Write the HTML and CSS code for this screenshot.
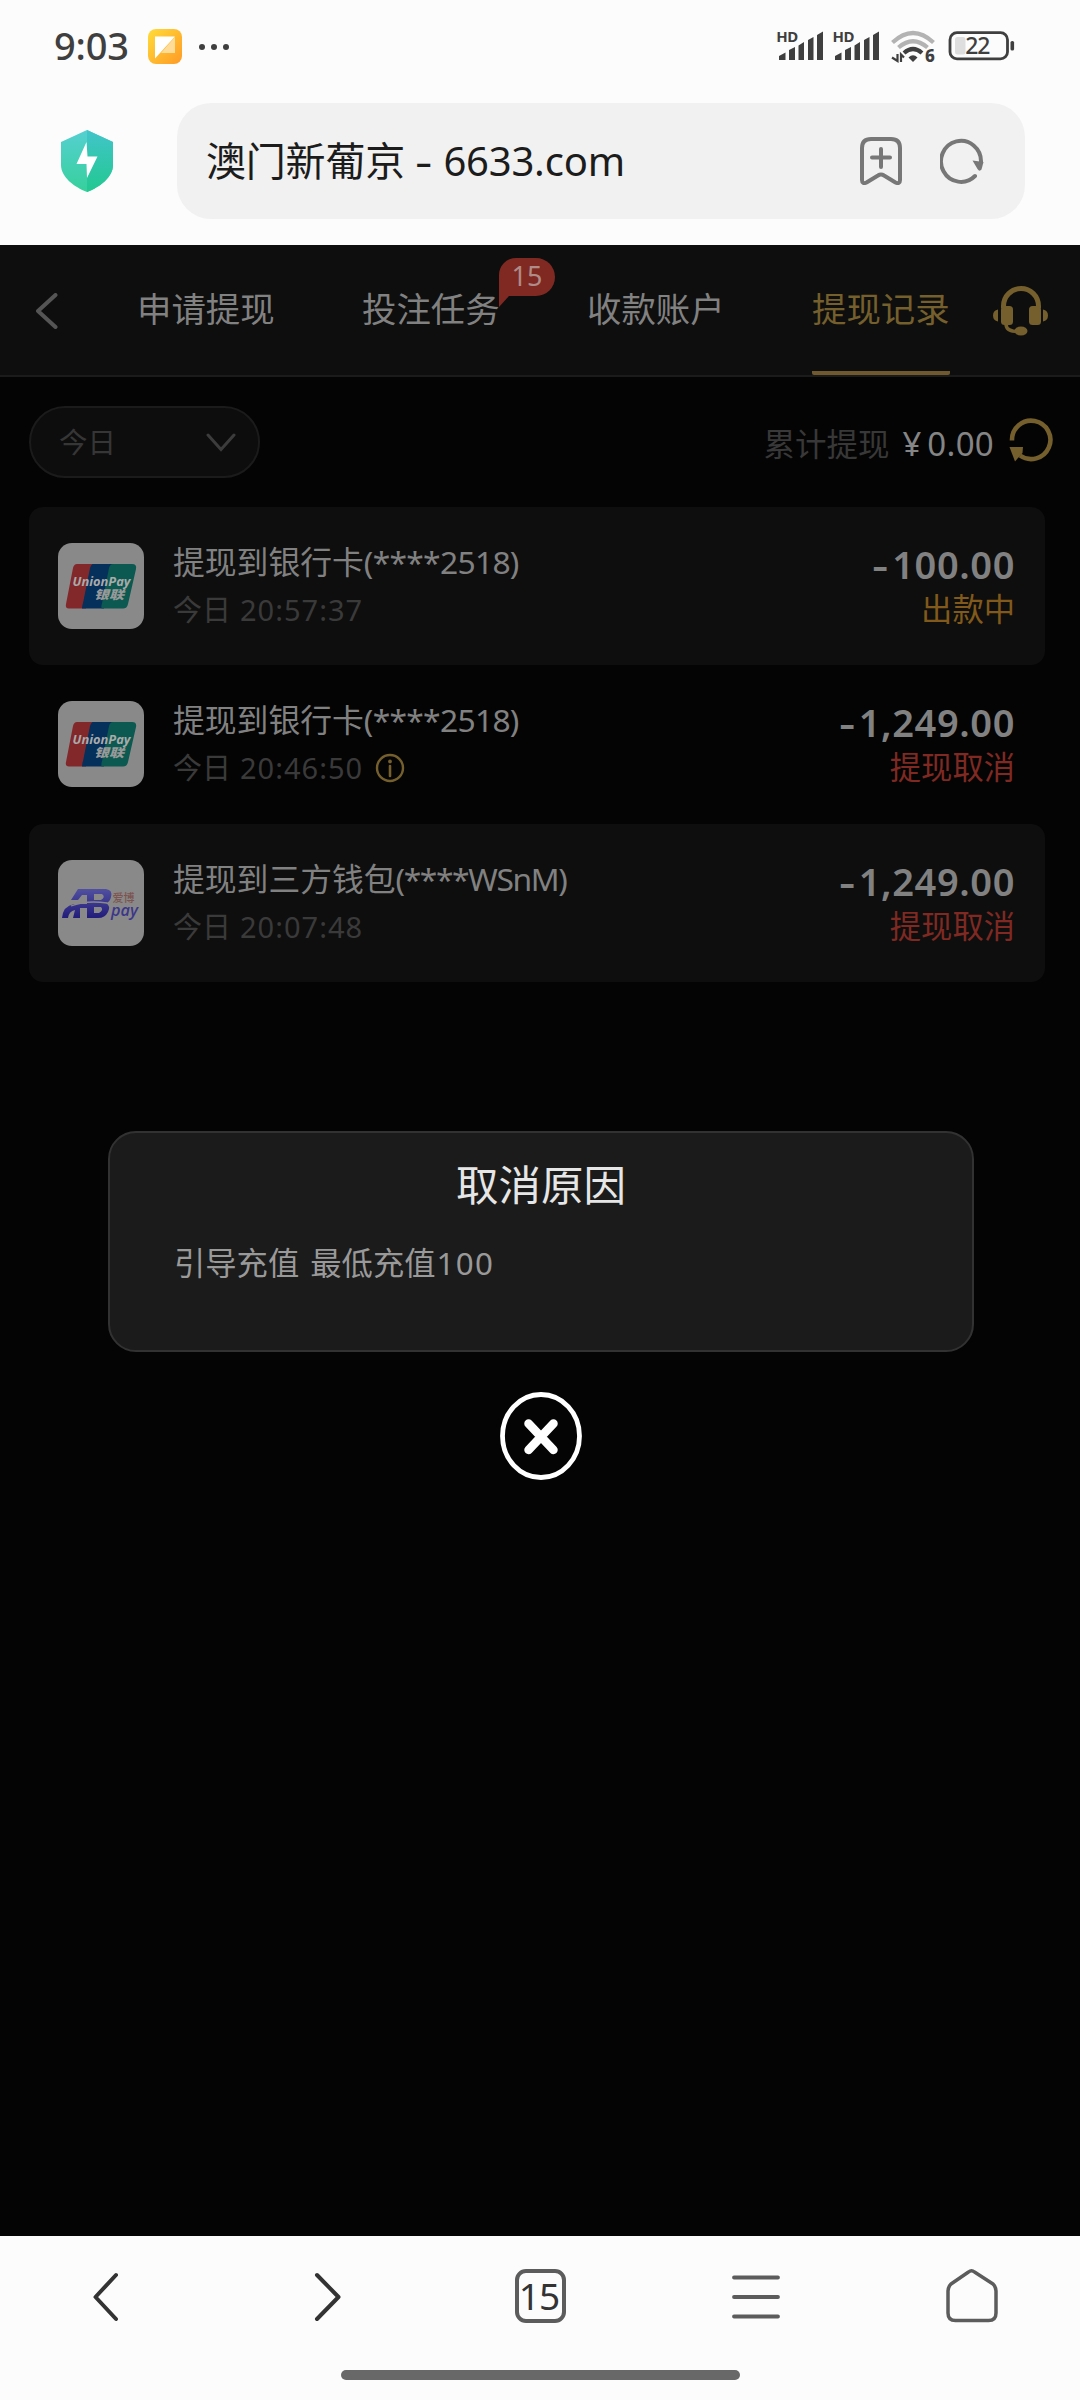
FILE: index.html
```html
<!DOCTYPE html>
<html lang="zh-CN">
<head>
<meta charset="utf-8">
<title>提现记录</title>
<link rel="stylesheet" href="styles.css">
</head>
<body>
<header class="chrome">
  <div class="status">
    <span class="clock">9:03</span>
    <svg class="note" width="34" height="35" viewBox="0 0 34 35">
      <defs><linearGradient id="ng" x1="0" y1="0" x2="1" y2="1"><stop offset="0" stop-color="#ffdc3a"/><stop offset="1" stop-color="#ff9a26"/></linearGradient></defs>
      <rect width="34" height="35" rx="8" fill="url(#ng)"/>
      <path d="M27 8V24H13Z" fill="#ffdc98"/><path d="M7 7.500H27L7 29.500Z" fill="#fff"/>
    </svg>
    <span class="dots"><i></i><i></i><i></i></span>
    <svg class="indicators" width="240" height="46" viewBox="776 23 240 46">
      <g fill="#3f3f3f">
        <text x="776.300" y="42.200" class="hd" textLength="22">HD</text>
        <path d="M779 60V56L785.500 52.500V60ZM789 60V50L795 47V60ZM798.500 60V45.500L804 42V60ZM808 60V40L813.500 37V60ZM817 60V35L823 31.500V60Z"/>
        <text x="832.500" y="42.200" class="hd" textLength="22">HD</text>
        <path d="M835 60V56L841.500 52.500V60ZM845 60V50L851 47V60ZM854.500 60V45.500L860 42V60ZM864 60V40L869.500 37V60ZM873 60V35L879 31.500V60Z"/>
      </g>
      <g fill="none" stroke-width="4.200">
        <path d="M892.500 42.500Q913 23.500 933.500 42.500" stroke="#b3b3b3"/>
        <path d="M898.500 47.500Q913 35 927.500 47.500" stroke="#b3b3b3"/>
        <path d="M904 53Q913 45 922 53" stroke="#3f3f3f"/>
      </g>
      <path d="M908.500 57.500Q913 53 917.500 57.500L913 62Z" fill="#3f3f3f"/>
      <path d="M897.500 54V61L892 57.500M901 62V54.500L904 57.500" fill="none" stroke="#3f3f3f" stroke-width="2.200"/>
      <text x="925" y="62" class="six">6</text>
      <rect x="950" y="32.700" width="57.500" height="26.200" rx="7" fill="none" stroke="#3f3f3f" stroke-width="2.800"/>
      <rect x="955" y="37" width="10.500" height="17.500" rx="2.500" fill="#dedede"/>
      <rect x="1010.500" y="41" width="3.600" height="9.500" rx="1.600" fill="#3f3f3f"/>
      <text x="965.300" y="54.300" class="bat" textLength="25">22</text>
    </svg>
  </div>
  <div class="address">
    <svg class="shield" width="54" height="62" viewBox="0 0 54 62">
      <defs><linearGradient id="sg" x1="0" y1="0" x2="0" y2="1"><stop offset="0" stop-color="#55d0d1"/><stop offset="1" stop-color="#37d09c"/></linearGradient>
      <linearGradient id="sh" x1="0" y1="0" x2="0" y2="1"><stop offset="0" stop-color="#42c5ca"/><stop offset="1" stop-color="#22c890"/></linearGradient></defs>
      <path d="M27 0L53 12V35C53 47 40 57 27 62C14 57 1 47 1 35V12Z" fill="url(#sg)"/>
      <path d="M27 0L53 12V35C53 47 40 57 27 62Z" fill="url(#sh)"/>
      <path d="M26.500 12L16.500 34H26.500L27 48L37.500 26.500H27.500Z" fill="#fff"/>
    </svg>
    <div class="urlbar">
      <span class="url">澳门新葡京 <span class="dash">-</span> 6633.com</span>
      <svg width="42" height="48" viewBox="0 0 42 48" fill="none" stroke="#777" stroke-width="4" stroke-linecap="round" stroke-linejoin="round">
        <path d="M2 43V11Q2 2 11 2H31Q40 2 40 11V43Q40 47.500 35.500 45.500L24 38.500Q21 36.500 18 38.500L6.500 45.500Q2 47.500 2 43ZM21 12V30M12 20.500H30"/>
      </svg>
      <svg width="44" height="46" viewBox="0 0 44 46">
        <path d="M35 38A20 20.500 0 1 1 41 24" fill="none" stroke="#777" stroke-width="4" stroke-linecap="round"/>
        <path d="M32.500 22.500L43.500 24L41.500 31.500Q39.500 34 37.500 31Z" fill="#777"/>
      </svg>
    </div>
  </div>
</header>

<main class="page">
  <nav class="tabs">
    <svg class="back" width="22" height="36" viewBox="0 0 22 36"><path d="M19.500 2L2 18L19.500 34" fill="none" stroke="#555" stroke-width="4" stroke-linecap="round" stroke-linejoin="round"/></svg>
    <div class="tablist">
      <span class="tab">申请提现</span>
      <span class="tab">投注任务<span class="badge">15<svg width="10" height="11" viewBox="0 0 10 11"><path d="M0 0H10L0 11Z" fill="#7f2922"/></svg></span></span>
      <span class="tab">收款账户</span>
      <span class="tab active">提现记录</span>
    </div>
    <svg class="headset" width="56" height="50" viewBox="0 0 56 50" fill="#745f2d">
      <path d="M10.500 22V20A17.500 17.500 0 0 1 45.500 20V22" fill="none" stroke="#745f2d" stroke-width="5"/>
      <rect x="8" y="20" width="12" height="19" rx="3.500"/><rect x="36" y="20" width="12" height="19" rx="3.500"/>
      <path d="M5 23.500V35.500Q0 34.500 0 29.500T5 23.500ZM50 23.500V35.500Q55 34.500 55 29.500T50 23.500Z"/>
      <path d="M13 38Q13 45.500 25 45.500" fill="none" stroke="#745f2d" stroke-width="3.500"/>
      <ellipse cx="28" cy="45" rx="6.500" ry="4.500"/>
    </svg>
  </nav>
  <section class="filters">
    <div class="select"><span>今日</span><svg width="30" height="19" viewBox="0 0 30 19"><path d="M2 2L15 16.500L28 2" fill="none" stroke="#3c3c3c" stroke-width="3" stroke-linecap="round"/></svg></div>
    <div class="total"><span class="label">累计提现</span><span class="yen">¥</span><span class="sum">0.00</span>
      <svg width="44" height="45" viewBox="0 0 44 45"><path d="M3 23.500A19.200 19.200 0 1 1 11 38.500" fill="none" stroke="#745f2d" stroke-width="4.600"/><path d="M.5 30H14L13.500 36L6 44.500Z" fill="#745f2d"/></svg>
    </div>
  </section>
  <section class="records">
    <article class="record">
      <svg class="logo" width="86" height="86" viewBox="0 0 86 86">
        <rect width="86" height="86" rx="14" fill="#898989"/>
        <g id="up">
          <path d="M19 21H39L28 65.500H11Q7 65.500 8 61L15 25Q16 21 19 21Z" fill="#83282a"/>
          <path d="M34.500 21H56L46 65.500H24Q24 63 25 60L32 25Q33 22 34.500 21Z" fill="#04305b"/>
          <path d="M55 21H74Q79 21 78 26L70 61Q69 65.500 65 65.500H43.500Q43 63 44 60L51 25Q52 21 55 21Z" fill="#0b5950"/>
          <text x="14.500" y="42.500" class="union" textLength="58" lengthAdjust="spacingAndGlyphs">UnionPay</text>
          <text x="36" y="55.500" class="yinlian" textLength="30" lengthAdjust="spacingAndGlyphs">银联</text>
        </g>
      </svg>
      <div class="info"><div class="title">提现到银行卡<span>(****2518)</span></div><div class="date">今日 <span>20:57:37</span></div></div>
      <div class="result"><div class="amount"><span>-</span>100.00</div><div class="state pending">出款中</div></div>
    </article>
    <article class="record plain">
      <svg class="logo" width="86" height="86" viewBox="0 0 86 86"><rect width="86" height="86" rx="14" fill="#898989"/><use href="#up"/></svg>
      <div class="info"><div class="title">提现到银行卡<span>(****2518)</span></div><div class="date">今日 <span>20:46:50</span>
        <svg width="30" height="30" viewBox="0 0 30 30"><circle cx="15" cy="15" r="13" fill="none" stroke="#745f2d" stroke-width="2.400"/><path d="M15 13V23" stroke="#745f2d" stroke-width="2.600" stroke-linecap="round"/><circle cx="15" cy="8.500" r="1.900" fill="#745f2d"/></svg></div></div>
      <div class="result"><div class="amount"><span>-</span>1,249.00</div><div class="state cancelled">提现取消</div></div>
    </article>
    <article class="record">
      <svg class="logo" width="86" height="86" viewBox="0 0 86 86">
        <defs><linearGradient id="ab" x1="0" y1="0" x2="0" y2="1"><stop offset="0" stop-color="#5150a0"/><stop offset="1" stop-color="#221c7a"/></linearGradient></defs>
        <rect width="86" height="86" rx="14" fill="#898989"/>
        <path fill="url(#ab)" fill-rule="evenodd" d="M20 29H48Q55 30 53 37Q52 42 48 43Q53 46 50 52Q47 58 40 58H29V48H22V58H15L17 50Q11 51 10 58H4Q5 46 16 44H29V35H24L20 40H13ZM36 34V40H43Q48 37 44 34ZM36 47V53H41Q46 50 43 47Z"/>
        <path d="M13 46Q28 40 49 43" fill="none" stroke="#898989" stroke-width="1.300"/>
        <text x="54.500" y="41.500" class="aibo" textLength="22">爱博</text>
        <text x="53" y="55.500" class="pay" textLength="27" lengthAdjust="spacingAndGlyphs">pay</text>
      </svg>
      <div class="info"><div class="title">提现到三方钱包<span class="wallet">(****WSnM)</span></div><div class="date">今日 <span>20:07:48</span></div></div>
      <div class="result"><div class="amount"><span>-</span>1,249.00</div><div class="state cancelled">提现取消</div></div>
    </article>
  </section>
  <div class="dialog">
    <div class="panel">
      <h1>取消原因</h1>
      <p>引导充值 最低充值<span>100</span></p>
    </div>
    <svg width="82" height="88" viewBox="0 0 82 88" fill="none" stroke="#fff">
      <ellipse cx="41" cy="44" rx="38.500" ry="41.500" stroke-width="4.800"/>
      <path d="M28.500 31.500L53.500 58M53.500 31.500L28.500 58" stroke-width="8.500" stroke-linecap="round"/>
    </svg>
  </div>
</main>

<footer class="toolbar">
  <div class="buttons">
    <svg width="216" height="60" viewBox="0 0 216 60"><path d="M116 8L95.500 30L116 52" fill="none" stroke="#333" stroke-width="4" stroke-linecap="round" stroke-linejoin="round"/></svg>
    <svg width="216" height="60" viewBox="0 0 216 60"><path d="M101 8L122.500 30L101 52" fill="none" stroke="#333" stroke-width="4" stroke-linecap="round" stroke-linejoin="round"/></svg>
    <div class="count"><span>15</span></div>
    <svg width="216" height="60" viewBox="0 0 216 60"><path d="M86 10.500H130M86 30H130M86 49.500H130" stroke="#5c5c5c" stroke-width="3.800" stroke-linecap="round"/></svg>
    <svg width="216" height="60" viewBox="0 0 216 60"><path d="M84 24Q84 20 87 17L104.500 5Q107.500 2.500 110.500 5L129 17Q132 20 132 24V46Q132 53.500 124.500 53.500H91.500Q84 53.500 84 46Z" fill="none" stroke="#5c5c5c" stroke-width="3.500" stroke-linejoin="round"/></svg>
  </div>
  <div class="gesture"></div>
</footer>
</body>
</html>
```
FILE: styles.css
```css
* { box-sizing: border-box; }
body {
  margin: 0;
  width: 1080px;
  height: 2400px;
  display: flex;
  flex-direction: column;
  background: #040404;
  font-family: "Noto Sans", "Noto Sans CJK SC", sans-serif;
  overflow: hidden;
}
svg { display: block; flex: none; }

.chrome { height: 245px; background: #fcfcfc; }
.status { display: flex; align-items: center; height: 92px; padding: 0 64px 0 54px; }
.clock { width: 94px; font-size: 38px; line-height: 90px; margin-top: -2px; font-weight: 500; color: #3f3f3f; letter-spacing: -.2px; }
.note { margin-top: 1px; }
.dots { display: flex; gap: 6px; margin: 1px auto 0 17px; }
.dots i { width: 6px; height: 6px; border-radius: 50%; background: #3f3f3f; }
.hd { font-size: 15px; font-weight: 700; }
.six { font-size: 17px; font-weight: 800; fill: #3f3f3f; }
.bat { font-size: 23px; font-weight: 500; fill: #3f3f3f; }
.address { display: flex; align-items: center; padding: 11px 55px 0 60px; }
.urlbar {
  display: flex;
  align-items: center;
  width: 848px;
  height: 116px;
  margin-left: auto;
  padding: 0 41px 0 29px;
  border-radius: 34px;
  background: #f1f1f1;
}
.url { margin-right: auto; font-size: 40px; line-height: 116px; color: #1c1c1c; letter-spacing: -.2px; }
.dash { display: inline-block; width: 18px; transform: scaleX(1.35); transform-origin: left; }
.urlbar svg + svg { margin-left: 38px; }

.page { position: relative; height: 1991px; }
.tabs { display: flex; align-items: flex-start; height: 132px; padding-left: 36px; background: #0e0e0e; border-bottom: 2px solid #1b1b1b; }
.back { margin-top: 48px; }
.tablist { display: flex; gap: 87px; margin-left: 79px; }
.tab { position: relative; width: 138px; height: 130px; font-size: 34.400px; line-height: 128px; color: #818181; white-space: nowrap; }
.tab.active { color: #745f2d; border-bottom: 4px solid #70592f; border-radius: 0 0 2px 2px; }
.badge {
  position: absolute;
  left: 137px;
  top: 13px;
  width: 56px;
  height: 38px;
  border-radius: 17px 19px 19px 0;
  background: #7f2922;
  color: #b08c88;
  font-size: 27px;
  line-height: 36px;
  text-align: center;
}
.badge svg { position: absolute; left: 0; top: 38px; }
.headset { margin: 41px 0 0 43px; }

.filters { display: flex; align-items: flex-start; height: 130px; padding: 29px 27px 0 29px; }
.select { display: flex; align-items: center; justify-content: space-between; width: 231px; height: 72px; padding: 0 22px 0 28px; border: 2px solid #1b1b1b; border-radius: 36px; background: #0d0d0d; color: #363636; font-size: 28.500px; }
.select span { padding-bottom: 3px; }
.total { display: flex; align-items: center; height: 76px; margin-left: auto; line-height: 76px; color: #858585; font-size: 33px; }
.total .label { color: #383838; font-size: 31.500px; }
.total .yen { margin-left: 13px; }
.total .sum { margin: 0 15px 0 6px; letter-spacing: .3px; }
.total svg { margin-top: -9px; }

.records { width: 1016px; margin-left: 29px; }
.record { display: flex; height: 158px; padding: 36px 30px 0 29px; border-radius: 14px; background: #0e0e0e; }
.record.plain { height: 159px; background: none; }
.info { margin: -5px auto 0 29px; }
.title { font-size: 31.800px; line-height: 48px; color: #818181; white-space: nowrap; }
.title span { letter-spacing: -.7px; }
.title .wallet { letter-spacing: -1.400px; }
.date { display: flex; align-items: center; font-size: 29px; line-height: 48px; color: #3a3a3a; }
.date span { margin-left: 9px; letter-spacing: 1px; }
.date svg { margin-left: 12px; }
.result { margin-top: -2px; text-align: right; }
.amount { height: 45px; font-size: 38px; line-height: 47px; font-weight: 600; color: #818181; letter-spacing: .6px; }
.amount span { display: inline-block; margin-right: 3px; transform: scaleX(1.3); transform-origin: right; }
.state { font-size: 31.300px; line-height: 46px; }
.pending { color: #81591a; }
.cancelled { color: #7f2922; }
.union { font: italic 700 13px "Open Sans", sans-serif; fill: #aaa; }
.yinlian { font: italic 900 12px "Noto Sans CJK SC", sans-serif; fill: #999; }
.aibo { font: 500 11px "Noto Sans CJK SC", sans-serif; fill: #7d5450; }
.pay { font: italic 600 16px "Open Sans", sans-serif; fill: #3d378a; }

.dialog { position: absolute; left: 108px; top: 886px; display: flex; flex-direction: column; align-items: center; gap: 40px; width: 866px; }
.panel { width: 866px; height: 221px; padding: 24px 64px; border: 2px solid #323232; border-radius: 28px; background: #1b1b1b; }
.panel h1 { margin: 0; font-size: 42.500px; line-height: 56px; font-weight: 400; text-align: center; color: #e6e6e6; }
.panel p { margin: 26px 0 0; font-size: 31.300px; line-height: 48px; color: #999; word-spacing: 3px; }
.panel p span { margin-left: 1px; letter-spacing: 1.400px; }

.toolbar { height: 164px; padding-top: 31px; background: #fcfcfc; }
.buttons { display: flex; }
.count { display: flex; justify-content: center; width: 216px; }
.count span { width: 51px; height: 54px; margin-top: 2px; border: 4px solid #5c5c5c; border-radius: 11px; font-size: 37px; line-height: 46px; text-align: center; letter-spacing: -1px; color: #333; text-indent: -2px; }
.gesture { width: 399px; height: 10px; margin: 43px auto 0; border-radius: 5px; background: #686868; }
```
